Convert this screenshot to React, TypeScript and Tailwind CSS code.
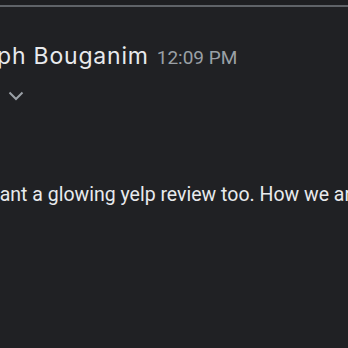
import React from "react";

export default function App() {
  return (
    <div className="w-[348px] h-[348px] overflow-hidden bg-[#202124] flex flex-col">
      <div className="h-[5px] bg-[#1e1f22]" />
      <div className="h-[2px] bg-[#5f6368]" />
      <div className="flex flex-col">
        <div className="flex items-baseline h-[28px] mt-[35px] ml-[-3px] whitespace-nowrap">
          <span
            className="text-[23px] leading-[28px] tracking-[0.8px] text-[#e8eaed]"
            style={{ fontFamily: "Inter, 'Noto Sans', sans-serif" }}
          >
            ph Bouganim
          </span>
          <span
            className="ml-[8px] text-[19px] leading-[28px] text-[#9aa0a6]"
            style={{ fontFamily: "Roboto, sans-serif" }}
          >
            12:09 PM
          </span>
        </div>
        <div className="mt-[21px] ml-[8px] w-[16px] h-[10px]">
          <svg width="16" height="10" viewBox="0 0 16 10">
            <path d="M1.5 1.5 L8 8 L14.5 1.5" stroke="#9aa0a6" strokeWidth="2" fill="none" />
          </svg>
        </div>
        <div
          className="mt-[82px] ml-[-15px] whitespace-nowrap text-[19.5px] leading-[24px] text-[#e8eaed]"
          style={{ fontFamily: "Roboto, sans-serif" }}
        >
          want a glowing yelp review too. How we are
        </div>
      </div>
    </div>
  );
}
